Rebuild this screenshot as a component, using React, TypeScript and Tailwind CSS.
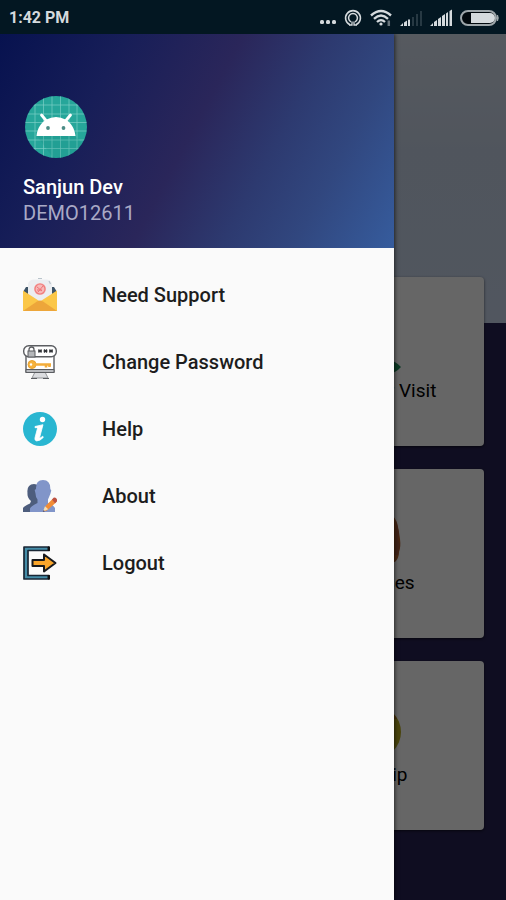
import type { ReactNode } from "react";

function StatusBar() {
  return (
    <header className="h-[34px] shrink-0 bg-[#031722] flex items-center justify-between pt-0.5 pl-[9px] pr-[7px] text-[#d5dadd]">
      <span className="text-base leading-5 font-bold">1:42 PM</span>

      <div className="flex items-center gap-2">
        {/* more notifications */}
        <svg width="16" height="18" viewBox="0 0 16 18" fill="currentColor">
          <rect y="11" width="4" height="4" rx="1.5" />
          <rect x="6" y="11" width="4" height="4" rx="1.5" />
          <rect x="12" y="11" width="4" height="4" rx="1.5" />
        </svg>
        {/* hotspot */}
        <svg width="18" height="18" viewBox="0 0 18 18" fill="none" stroke="currentColor">
          <path d="M6 15.8A7.4 7.4 0 1 1 12 15.8" strokeWidth="1.6" />
          <path d="M7 12.8A4.4 4.4 0 1 1 11 12.8" strokeWidth="1.5" />
          <path d="M5 16h3v-3.5M13 16h-3v-3.5" strokeWidth="1.3" />
        </svg>
        {/* wifi */}
        <svg width="22" height="18" viewBox="0 0 22 18" fill="none" stroke="currentColor">
          <path d="M1 6.5Q11-2.5 21 6.500" strokeWidth="2.4" />
          <path d="M4 9.8Q11 3.3 18 9.8" strokeWidth="2.3" />
          <path d="M7 13Q11 9 15 13" strokeWidth="2.2" />
          <circle cx="11" cy="15" r="1.6" fill="currentColor" stroke="none" />
          <path d="M18.8 11.5V17" stroke="#68747b" strokeWidth="2.5" />
        </svg>
        {/* sim 1, weak */}
        <svg width="22" height="18" viewBox="0 0 22 18" fill="currentColor">
          <path d="M0 17l3-3v3zM4 13.5l3-2V17H4zM8 10.5h2V17H8z" />
          <path d="M12 8h2v9h-2zM16 5h2v12h-2zM20 2h2v15h-2z" fill="#273943" />
        </svg>
        {/* sim 2, full */}
        <svg width="22" height="18" viewBox="0 0 22 18" fill="currentColor">
          <path d="M0 17l3-3v3zM4 13l3-2v6H4zM8 10l3-2v9H8zM12 7l3-2v12h-3zM16 4.5l2-1.5v14h-2zM19.5 2L22 .5V17h-2.5z" />
        </svg>
        {/* battery */}
        <svg width="39" height="18" viewBox="0 0 39 18">
          <rect x="1" y="2" width="35" height="14" rx="7" fill="#02090e" stroke="#9ea6aa" strokeWidth="2" />
          <path d="M11 4H30a5 5 0 0 1 0 10H11z" fill="currentColor" />
          <path d="M37.5 6q1.5 3 0 6z" fill="#9ea6aa" stroke="#9ea6aa" />
        </svg>
      </div>
    </header>
  );
}

function Avatar() {
  return (
    <svg className="w-16 h-16" viewBox="-1 -1 64 64">
      <defs>
        <clipPath id="avatar">
          <circle cx="32" cy="32" r="31" />
        </clipPath>
      </defs>
      <g clipPath="url(#avatar)">
        <rect width="64" height="64" fill="#26a69a" />
        <path
          d="M11 0V64M19.5 0V64M28 0V64M36.5 0V64M45 0V64M53 0V64M0 10H64M0 19H64M0 27.5H64M0 36H64M0 45H64M0 53.5H64"
          stroke="#7bcfc6"
          strokeWidth="0.7"
        />
        <path d="M13 41h38l8 8v15H30z" fill="#15897e" opacity="0.2" />
      </g>
      <path d="M17.5 20l5 6M46.5 20L41.5 26" stroke="#fff" strokeWidth="2.8" strokeLinecap="round" />
      <path d="M12.5 41C13.5 33 17 27.500 22.500 24.500Q27 22 32 22T41.500 24.500C47 27.500 50.500 33 51.500 41z" fill="#fff" />
      <circle cx="24" cy="33" r="1.9" fill="#4c8c86" />
      <circle cx="39.5" cy="33" r="1.9" fill="#4c8c86" />
    </svg>
  );
}

function MailIcon() {
  return (
    <svg className="w-[34px] h-[34px]" viewBox="0 0 34 34">
      <path d="M0 14L3 9H31l3 5v4H0z" fill="#3d5366" />
      <path d="M5 6Q6 2 10 1.500H24Q28 2 29 6V20L17 26 5 20z" fill="#eceef1" />
      <path d="M15 0.500h4M26 3l1.500 3" stroke="#b9c4cb" strokeWidth="1.2" />
      <circle cx="17" cy="11" r="6" fill="#f7b9b8" />
      <circle cx="17" cy="11" r="5" fill="none" stroke="#ef7c7c" strokeWidth="1.2" />
      <path d="M14 9l5 4M20 8l-5 6M14 12h5" stroke="#ee7377" />
      <path d="M0 12.5L17 23.5 34 12.5V33H0z" fill="#fbc748" />
      <path d="M0 33L14 23.500Q17 21.500 20 23.500L34 33z" fill="#eda63a" />
    </svg>
  );
}

function PasswordIcon() {
  return (
    <svg className="w-[34px] h-[34px]" viewBox="0 0 34 34" fill="none" stroke="#5b5d61">
      <path d="M9 33l3-6h10l3 6z" fill="#dcdde0" stroke="#929498" />
      <path d="M8 33.5h6M20 33.5h6" />
      <path d="M3 8h28v19H3z" fill="#fff" strokeWidth="1.4" />
      <path d="M3 24.5h28v3H3z" fill="#b9bbbf" />
      <rect x="0.700" y="0.700" width="32.600" height="11" rx="5" fill="#fff" strokeWidth="1.4" />
      <path d="M6 6V4.500a2.500 2.500 0 0 1 5 0V6" strokeWidth="1.3" />
      <rect x="5" y="6" width="7" height="6" fill="#b5b7ba" />
      <path
        d="M15.500 4.500l3 3M18.500 4.500l-3 3M15 6h4M21 4.500l3 3M24 4.500l-3 3M20.500 6h4M26.500 4.500l3 3M29.500 4.500l-3 3M26 6h4"
        stroke="#333539"
        strokeWidth="1.2"
      />
      <circle cx="9" cy="19.5" r="4" fill="#f6b23b" stroke="#e8a02e" />
      <circle cx="8" cy="19.5" r="1.2" fill="#fff" stroke="none" />
      <path d="M12 19.500h16M23 20v2.500M26.500 20v2" stroke="#f3ad3b" strokeWidth="2.6" />
    </svg>
  );
}

function InfoIcon() {
  return (
    <svg className="w-[34px] h-[34px]" viewBox="0 0 34 34">
      <circle cx="17" cy="17" r="17" fill="#29b6d1" />
      <circle cx="19.5" cy="7.5" r="2.7" fill="#fff" />
      <path
        d="M12 14.5L20 12.7 16.7 25.2Q16.3 27 19.7 24.2L20.3 25.4Q16.8 29.2 13.6 28.9 11.4 28.5 12 25.8L14.5 16.3Q14.5 15.4 12 15.7z"
        fill="#fff"
        stroke="#fff"
        strokeWidth="0.8"
      />
    </svg>
  );
}

function PeopleIcon() {
  return (
    <svg className="w-[34px] h-[34px]" viewBox="0 0 34 34">
      <path d="M0 33V29Q1 27 7 24.5L8 22Q4 19 4.5 14 3.5 5.5 11 5q6 0 6 9L15 33z" fill="#4d5d7d" />
      <path
        d="M7 33V29.5Q8 27 14.5 24V20.5Q12.5 18 12.5 14.5L11.7 11 13 10Q12.5 1 20 1q7.5 0 7.3 9l1 1.500-1 3.500-2.300 5.500V24Q30 25.5 32 29v4z"
        fill="#8195c9"
      />
      <path d="M22.500 27l7-7 3.500 3.500-9 8-3.500 1z" fill="#f28c35" />
      <path d="M29 20.500l1.500-1.700Q33 18 34 20.500v2l-2 1.700z" fill="#bd5141" />
      <path d="M20 32.500l2-5.200 3.300 3z" fill="#f4dfb7" />
      <path d="M19.800 33l.8-2 1.300 1.200z" fill="#446" />
    </svg>
  );
}

function LogoutIcon() {
  return (
    <svg className="w-[34px] h-[34px]" viewBox="0 0 34 34" strokeLinejoin="round">
      <path d="M1 1H26V4.500H5V29.500H26V33H1z" fill="#458da8" stroke="#182634" strokeWidth="1.7" />
      <path d="M25 1h1.500v3.500H25zM25 29.500h1.500V33H25z" fill="#111" stroke="#111" />
      <path d="M9.500 14H21V8.500L32.500 17 21 25.500V20H9.500z" fill="#f9a52b" stroke="#17191d" strokeWidth="2" />
    </svg>
  );
}

const menu: { label: string; icon: ReactNode }[] = [
  { label: "Need Support", icon: <MailIcon /> },
  { label: "Change Password", icon: <PasswordIcon /> },
  { label: "Help", icon: <InfoIcon /> },
  { label: "About", icon: <PeopleIcon /> },
  { label: "Logout", icon: <LogoutIcon /> },
];

function Drawer() {
  return (
    <aside className="absolute inset-y-0 left-0 right-28 bg-[#fafafa] shadow-[1px_0_4px_rgba(0,0,0,0.6)]">
      <div className="h-[214px] pl-[23px] pt-[60px] bg-[linear-gradient(118deg,#07124f_0%,#171e58_25%,#2a265a_48%,#2d3a70_66%,#31477f_80%,#365c9d_100%)]">
        <Avatar />
        <p className="mt-4 text-xl leading-[26px] font-medium text-white">Sanjun Dev</p>
        <p className="text-xl leading-[26px] text-[#a9aac6]">DEMO12611</p>
      </div>

      <nav className="pt-[13px]">
        {menu.map((item) => (
          <a key={item.label} href="#" className="flex items-center h-[67px] pl-[23px] gap-[45px]">
            {item.icon}
            <span className="text-xl font-medium text-[#1d1d1d]">{item.label}</span>
          </a>
        ))}
      </nav>
    </aside>
  );
}

function Card({ label, children }: { label: string; children: ReactNode }) {
  return (
    <a
      href="#"
      className="col-start-2 h-[169px] pt-11 flex flex-col items-center bg-white rounded-[4px] shadow-[0_1px_3px_rgba(0,0,0,0.6)]"
    >
      <svg className="w-14 h-14" viewBox="0 0 56 56">
        {children}
      </svg>
      <span className="text-[19px] leading-7 text-black">{label}</span>
    </a>
  );
}

function Dashboard() {
  return (
    <main className="h-full bg-[#272253]">
      <div className="h-[289px] bg-[linear-gradient(180deg,#d7e0ee_0%,#c9d5e8_40%,#cad7ee_100%)]" />
      <div className="-mt-[46px] px-[22px] grid grid-cols-2 gap-x-[22px] gap-y-[23px]">
        <Card label="Customer Visit">
          <path d="M4 42h36v-4q10 2 15 8-5 6-15 8v-4H4z" fill="#1c8f5a" />
        </Card>
        <Card label="Expenses">
          <path d="M16 2h30q5 5 6 12 1 5 2 12 1 8-1 13 0 6-4 10H10V10z" fill="#b8642f" />
          <path d="M50 8q2 6 3 12l-1 6 2 6-2 10h-3z" fill="#a3573b" />
        </Card>
        <Card label="Pay Slip">
          <circle cx="28" cy="27" r="27" fill="#b7ab1e" />
          <path d="M28 0a27 27 0 0 1 23 14H28z" fill="#b5701e" />
        </Card>
      </div>
    </main>
  );
}

export default function App() {
  return (
    <div className="min-h-screen flex flex-col font-['Roboto',sans-serif]">
      <StatusBar />
      <div className="relative flex-1 overflow-hidden">
        <div className="absolute inset-0">
          <Dashboard />
        </div>
        <div className="absolute inset-0 bg-black/60" />
        <Drawer />
      </div>
    </div>
  );
}
